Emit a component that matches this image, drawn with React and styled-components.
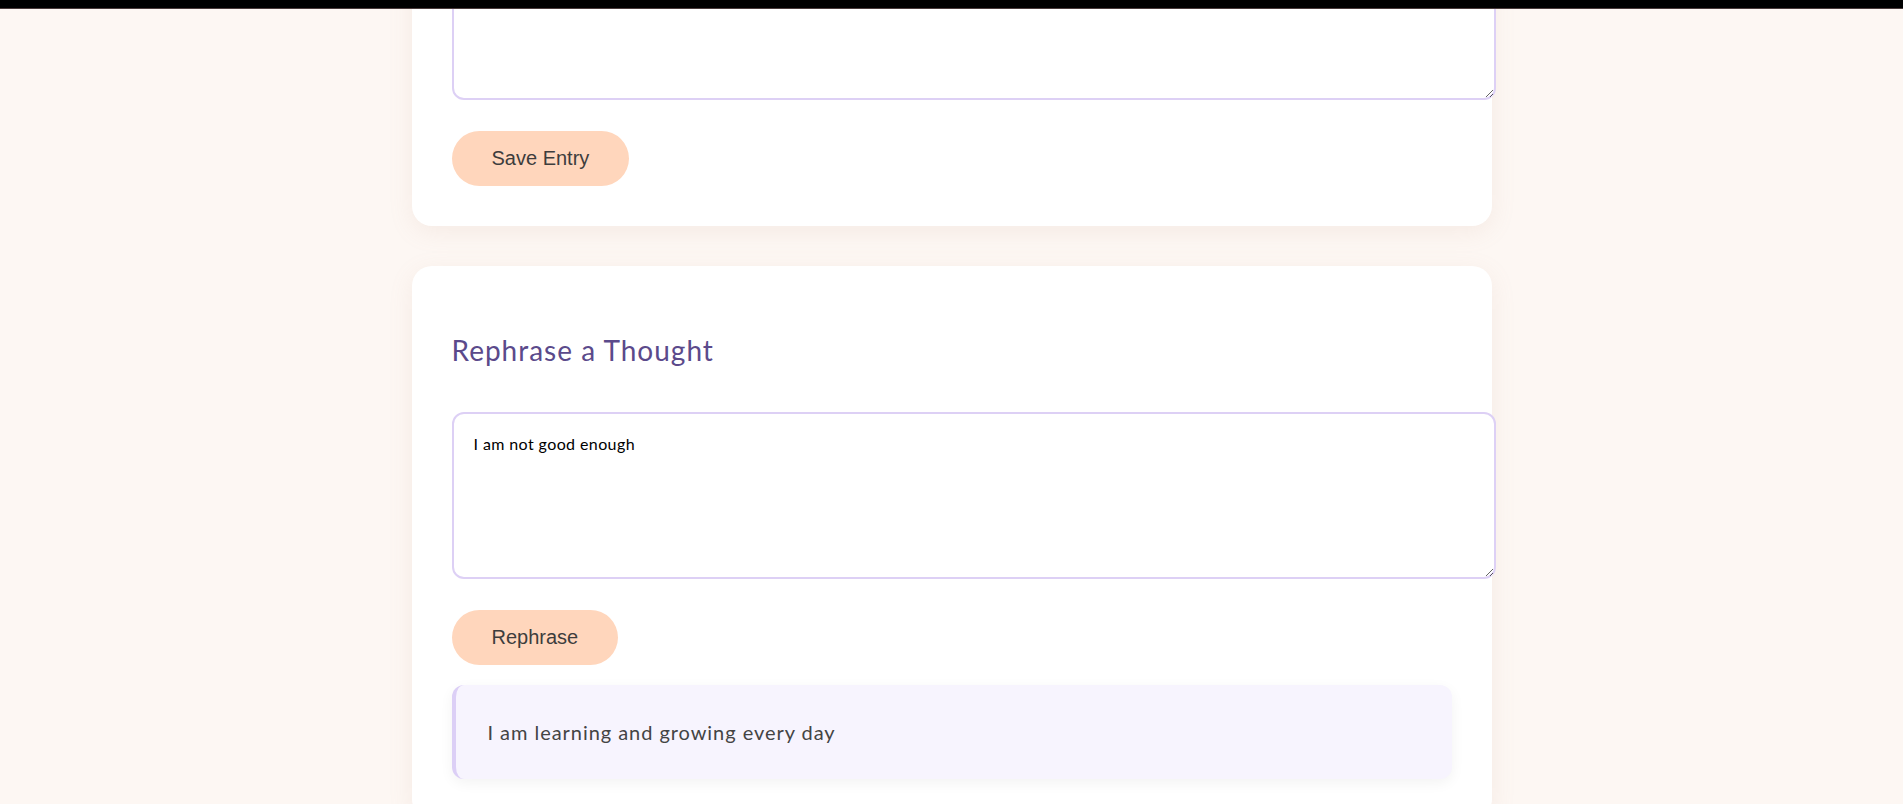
import React from "react";
import styled, { createGlobalStyle } from "styled-components";

const GlobalStyle = createGlobalStyle`
  html, body {
    margin: 0;
    padding: 0;
    height: 100%;
    overflow: hidden;
  }
  body {
    background: #fdf7f3;
    font-family: Lato, "Open Sans", sans-serif;
    color: #444;
  }
`;

// the dark strip of the window frame over the scrolled page
const TopEdge = styled.div`
  position: fixed;
  top: 0;
  left: 0;
  right: 0;
  height: 8px;
  background: #000;
  border-bottom: 1px solid #4a3b3b;
  z-index: 10;
`;

const Main = styled.main`
  width: 1080px;
  margin: -107px auto 0;
  display: flex;
  flex-direction: column;
  gap: 40px;
`;

const Card = styled.section`
  background: #fff;
  border-radius: 20px;
  padding: 40px;
  display: flex;
  flex-direction: column;
  align-items: flex-start;
  box-shadow: 0 6px 24px rgba(190, 150, 130, 0.12);
`;

const Heading = styled.h2`
  margin: 28px 0 44px;
  font-family: Lato, sans-serif;
  font-weight: 400;
  font-size: 28px;
  line-height: 1.2;
  letter-spacing: 1px;
  color: #5b4a8b;
`;

const Field = styled.textarea`
  display: block;
  width: 100%;
  height: 123px;
  padding: 20px;
  border: 2px solid #ddd0f5;
  border-radius: 12px;
  background: #fff;
  font-family: Lato, sans-serif;
  font-size: 16px;
  letter-spacing: 0.4px;
  color: #000;
  outline: none;
`;

const PillButton = styled.button`
  margin-top: 31px;
  padding: 16px 40px;
  border: none;
  border-radius: 30px;
  background: #ffd6bc;
  font-family: "Liberation Sans", Arial, sans-serif;
  font-size: 20px;
  line-height: 23px;
  color: #3d3d3d;
  cursor: pointer;
`;

const Result = styled.div`
  align-self: stretch;
  margin-top: 20px;
  padding: 32px;
  border-left: 4px solid #dccff6;
  border-radius: 12px;
  background: #f7f4fe;
  box-shadow: 0 4px 14px rgba(0, 0, 0, 0.05);
  font-size: 20px;
  line-height: 30px;
  letter-spacing: 0.95px;
  color: #444;
`;

export default function App() {
  return (
    <>
      <GlobalStyle />
      <TopEdge />
      <Main>
        <Card>
          <Field defaultValue="" />
          <PillButton>Save Entry</PillButton>
        </Card>
        <Card>
          <Heading>Rephrase a Thought</Heading>
          <Field defaultValue="I am not good enough" />
          <PillButton>Rephrase</PillButton>
          <Result>I am learning and growing every day</Result>
        </Card>
      </Main>
    </>
  );
}
